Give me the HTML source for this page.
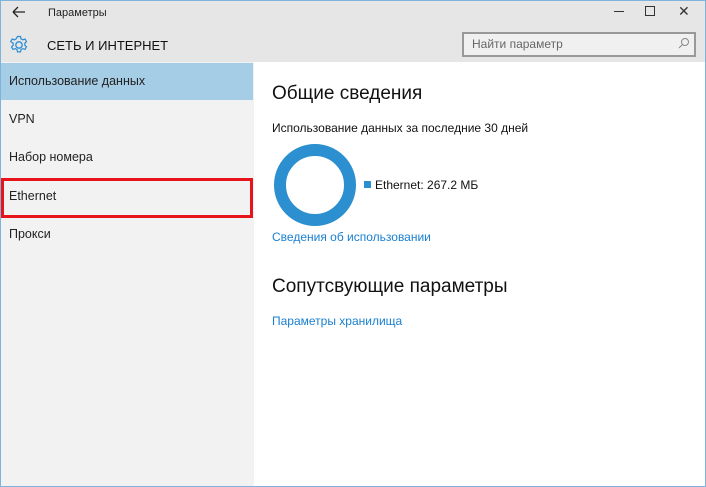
<html><head><style>
body{margin:0;width:706px;height:487px;overflow:hidden;font-family:"Liberation Sans",sans-serif;background:#fff;position:relative}
.a{position:absolute;white-space:nowrap}
</style></head><body>
<div class="a" style="left:0;top:0;width:704px;height:485px;border:1px solid #7eb4dc"></div>
<div class="a" style="left:1px;top:1px;width:704px;height:61px;background:#e6e6e6"></div>
<svg class="a" style="left:12px;top:6px" width="14" height="12"><path d="M1 6H13M1 6L6 1M1 6L6 11" stroke="#222" stroke-width="1.3" fill="none"/></svg>
<div class="a" style="left:48px;top:7px;font-size:11px;color:#222">Параметры</div>
<div class="a" style="left:614px;top:11px;width:10px;height:1px;background:#333"></div>
<div class="a" style="left:645px;top:6px;width:8px;height:8px;border:1px solid #333"></div>
<div class="a" style="left:678px;top:3px;font-size:14px;color:#333">✕</div>
<svg class="a" style="left:9px;top:35px" width="20" height="20" viewBox="0 0 20 20"><circle cx="10" cy="10" r="3.2" fill="none" stroke="#2a8dd4" stroke-width="1.3"/><path d="M8.5 1.5h3l.5 2.3 1.8 1 2.2-.8 1.5 2.6-1.7 1.6v2l1.7 1.6-1.5 2.6-2.2-.8-1.8 1-.5 2.3h-3l-.5-2.3-1.8-1-2.2.8-1.5-2.6 1.7-1.6v-2L1.7 6.6l1.5-2.6 2.2.8 1.8-1z" fill="none" stroke="#2a8dd4" stroke-width="1.2"/></svg>
<div class="a" style="left:47px;top:38px;font-size:13px;color:#111">СЕТЬ И ИНТЕРНЕТ</div>
<div class="a" style="left:462px;top:32px;width:230px;height:21px;border:2px solid #999;background:#f0f0f0"></div>
<div class="a" style="left:472px;top:37px;font-size:12px;color:#666">Найти параметр</div>
<svg class="a" style="left:678px;top:37px" width="12" height="12"><circle cx="7" cy="5" r="3.5" fill="none" stroke="#888"/><path d="M4.5 7.5L1 11" stroke="#888"/></svg>
<div class="a" style="left:1px;top:62px;width:253px;height:424px;background:#f2f2f2"></div>
<div class="a" style="left:1px;top:63px;width:252px;height:37px;background:#a6cde6"></div>
<div class="a" style="left:9px;top:74px;font-size:12.5px;color:#222">Использование данных</div>
<div class="a" style="left:9px;top:112px;font-size:12.5px;color:#222">VPN</div>
<div class="a" style="left:9px;top:150px;font-size:12.5px;color:#222">Набор номера</div>
<div class="a" style="left:1px;top:178px;width:246px;height:34px;border:3px solid #e8141c"></div>
<div class="a" style="left:9px;top:189px;font-size:12.5px;color:#222">Ethernet</div>
<div class="a" style="left:9px;top:227px;font-size:12.5px;color:#222">Прокси</div>
<div class="a" style="left:272px;top:83px;font-size:19px;color:#111">Общие сведения</div>
<div class="a" style="left:272px;top:121px;font-size:12px;color:#111">Использование данных за последние 30 дней</div>
<div class="a" style="left:274px;top:144px;width:58px;height:58px;border:12px solid #2b8fd0;border-radius:50%"></div>
<div class="a" style="left:364px;top:181px;width:7px;height:7px;background:#2b8fd0"></div>
<div class="a" style="left:375px;top:178px;font-size:12px;color:#111">Ethernet: 267.2 МБ</div>
<div class="a" style="left:272px;top:230px;font-size:12px;color:#1a80cf">Сведения об использовании</div>
<div class="a" style="left:272px;top:276px;font-size:19px;color:#111">Сопутсвующие параметры</div>
<div class="a" style="left:272px;top:314px;font-size:12px;color:#1a80cf">Параметры хранилища</div>
</body></html>
